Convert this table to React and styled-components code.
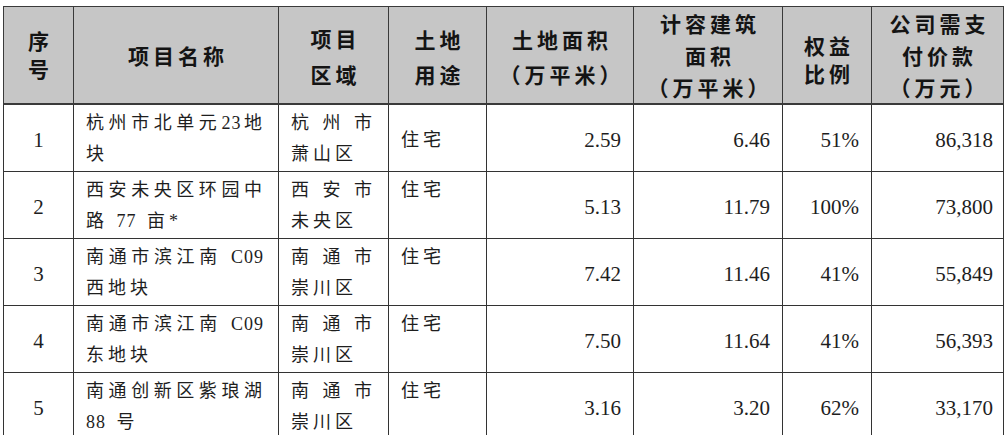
import React from 'react';
import styled, {createGlobalStyle} from 'styled-components';

const GlobalStyle = createGlobalStyle`
  html, body {
    margin: 0;
    padding: 0;
    background: #fff;
  }
  body {
    font-family: "Liberation Serif", "Noto Sans CJK SC", serif;
    color: #1e1e1e;
  }
`;

const Page = styled.div`
  padding: 6px 0 0 3px;
`;

const Table = styled.table`
  border-collapse: collapse;
  table-layout: fixed;
  width: 1000px;
`;

const HeadRow = styled.tr`
  height: 96px;
`;

const BodyRow = styled.tr`
  height: 67px;
`;

const HeadCell = styled.th`
  background: #c6c6c6;
  border: 1px solid #3a3a3a;
  border-bottom-width: 2px;
  color: #141414;
  font-family: "Noto Sans CJK SC", sans-serif;
  font-size: 21px;
  font-weight: 700;
  letter-spacing: 4px;
  line-height: ${props => props.$lh || 34}px;
  padding: ${props => Math.max(props.$shift || 0, 0)}px 0 ${props => Math.max(-(props.$shift || 0), 0)}px 4px;
  text-align: center;
  vertical-align: middle;
`;

const IndexCell = styled.td`
  border: 1px solid #333;
  font-family: "Liberation Serif", serif;
  font-size: 21px;
  padding: 5px 0 0;
  text-align: center;
  vertical-align: middle;
`;

const NumCell = styled.td`
  border: 1px solid #333;
  font-family: "Liberation Serif", serif;
  font-size: 21px;
  padding: 5px ${props => props.$right || 12}px 0 0;
  text-align: right;
  vertical-align: middle;
`;

const TextCell = styled.td`
  border: 1px solid #333;
  font-family: "Liberation Serif", "Noto Sans CJK SC", serif;
  font-size: 18px;
  letter-spacing: 4px;
  line-height: 31px;
  padding: ${props => props.$middle ? '6px 12px 0' : '3px 12px 0'};
  vertical-align: ${props => props.$middle ? 'middle' : 'top'};
  white-space: nowrap;
`;

const Line = styled.div`
  text-align: ${props => props.$spread ? 'justify' : 'left'};
  text-align-last: ${props => props.$spread ? 'justify' : 'auto'};
`;

// latin runs (digits, codes) sit tighter than the spaced-out CJK text
const Latin = styled.span`
  letter-spacing: 1px;
  margin-right: 2px;
`;

const widths = [70, 205, 110, 98, 147, 149, 89, 132];

const heads = [
  {lines: ['序', '号'], lh: 28, shift: -2},
  {lines: ['项目名称'], lh: 34},
  {lines: ['项目', '区域'], lh: 36, shift: 2},
  {lines: ['土地', '用途'], lh: 35, shift: 4},
  {lines: ['土地面积', '（万平米）'], lh: 35, shift: 4},
  {lines: ['计容建筑', '面积', '（万平米）'], lh: 32},
  {lines: ['权益', '比例'], lh: 28, shift: 8},
  {lines: ['公司需支', '付价款', '（万元）'], lh: 32}
];

const rows = [
  {no: '1', name: ['杭州市北单元23地', '块'], area: ['杭州市', '萧山区'], use: '住宅', useMid: true,
    land: '2.59', gfa: '6.46', ratio: '51%', pay: '86,318'},
  {no: '2', name: ['西安未央区环园中', '路 77 亩*'], area: ['西安市', '未央区'], use: '住宅',
    land: '5.13', gfa: '11.79', ratio: '100%', pay: '73,800'},
  {no: '3', name: ['南通市滨江南 C09', '西地块'], area: ['南通市', '崇川区'], use: '住宅',
    land: '7.42', gfa: '11.46', ratio: '41%', pay: '55,849'},
  {no: '4', name: ['南通市滨江南 C09', '东地块'], area: ['南通市', '崇川区'], use: '住宅',
    land: '7.50', gfa: '11.64', ratio: '41%', pay: '56,393'},
  {no: '5', name: ['南通创新区紫琅湖', '88 号'], area: ['南通市', '崇川区'], use: '住宅',
    land: '3.16', gfa: '3.20', ratio: '62%', pay: '33,170'}
];

const Mixed = ({text}) => text.split(/([A-Za-z0-9*]+)/).map((part, i) =>
  i % 2 ? <Latin key={i}>{part}</Latin> : part
);

const TwoLines = ({lines}) => (
  <>
    <Line $spread><Mixed text={lines[0]} /></Line>
    <Line><Mixed text={lines[1]} /></Line>
  </>
);

export default function App() {
  return (
    <Page>
      <GlobalStyle />
      <Table>
        <colgroup>
          {widths.map((w, i) => <col key={i} style={{width: w}} />)}
        </colgroup>
        <thead>
          <HeadRow>
            {heads.map((h, i) => (
              <HeadCell key={i} $lh={h.lh} $shift={h.shift}>
                {h.lines.map((l, j) => <div key={j}>{l}</div>)}
              </HeadCell>
            ))}
          </HeadRow>
        </thead>
        <tbody>
          {rows.map(r => (
            <BodyRow key={r.no}>
              <IndexCell>{r.no}</IndexCell>
              <TextCell><TwoLines lines={r.name} /></TextCell>
              <TextCell><TwoLines lines={r.area} /></TextCell>
              <TextCell $middle={r.useMid}>{r.use}</TextCell>
              <NumCell>{r.land}</NumCell>
              <NumCell>{r.gfa}</NumCell>
              <NumCell>{r.ratio}</NumCell>
              <NumCell $right={10}>{r.pay}</NumCell>
            </BodyRow>
          ))}
        </tbody>
      </Table>
    </Page>
  );
}
